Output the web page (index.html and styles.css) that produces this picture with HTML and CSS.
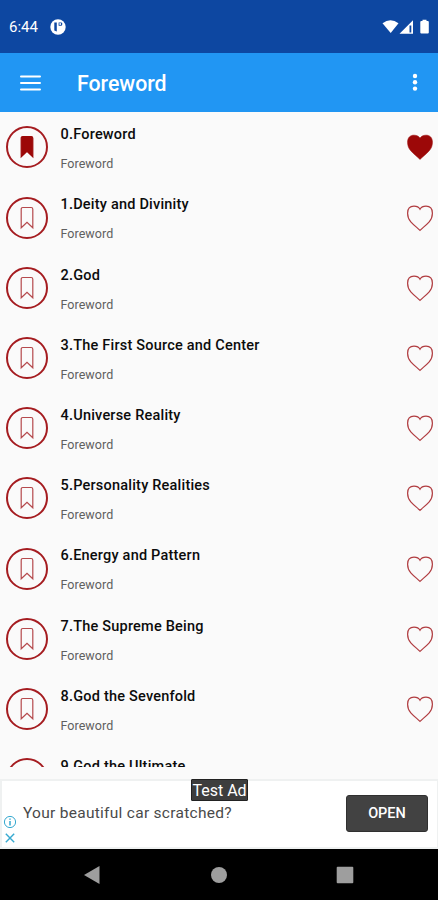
FILE: index.html
```html
<!DOCTYPE html>
<html lang="en">
<head>
<meta charset="utf-8">
<title>Foreword</title>
<link rel="stylesheet" href="styles.css">
</head>
<body>
<svg class="defs" aria-hidden="true">
  <symbol id="bookmark" viewBox="0 0 14 24"><path d="M1.2 3.2Q1.2 1.5 2.8 1.5H11.2Q12.8 1.5 12.8 3.2V21.8L7 16.4L1.2 21.8Z"/></symbol>
  <symbol id="heart" viewBox="0 0 28 28"><path d="M14 26.4C11.5 23.8 8 21.4 4.8 17.8C2.5 15.2 1.6 12.4 1.6 9.2C1.6 4.5 4.2 2.2 8 2.2C10.8 2.2 13 3.4 14 5.3C15 3.4 17.2 2.2 20 2.2C23.8 2.2 26.4 4.5 26.4 9.2C26.4 12.4 25.5 15.2 23.2 17.8C20 21.4 16.5 23.8 14 26.4Z"/></symbol>
</svg>
<div class="screen">
  <div class="status">
    <span class="time">6:44</span>
    <svg class="notif" viewBox="0 0 16 16"><circle cx="8" cy="8" r="7.7" fill="#fff"/><path d="M4.3 3.6H6.8V12.6L4.3 11.4Z" fill="#0d47a1"/><path d="M8.6 3.4H11.2Q12.2 3.4 12.2 4.6V5.6Q12.2 6.8 11 6.8H8.6Z" fill="#0d47a1"/><circle cx="10.2" cy="5" r=".9" fill="#fff"/></svg>
    <svg class="signals" viewBox="0 0 50 16"><path d="M.5 4.2Q8.5-1.8 16.5 4.2L8.7 14Z" fill="#fff"/><path d="M17.5 14.8L31 1.2V14.8Z" fill="#fff"/><path d="M28.4 6.5V13.5" stroke="#0d47a1" stroke-width="1.8"/><path d="M38.3 3Q38.3 2 39.3 2H40.5V.7H44.5V2H45.8Q46.8 2 46.8 3V13.6Q46.8 14.6 45.8 14.6H39.3Q38.3 14.6 38.3 13.6Z" fill="#fff"/></svg>
  </div>
  <header class="appbar">
    <svg class="menu" viewBox="0 0 22 16"><path d="M1 1.5H20M1 8H20M1 14.5H20" stroke="#fff" stroke-width="2" stroke-linecap="round"/></svg>
    <h1>Foreword</h1>
    <svg class="more" viewBox="0 0 6 20"><g fill="#fff"><circle cx="3" cy="3" r="2.2"/><circle cx="3" cy="9.3" r="2.2"/><circle cx="3" cy="15.6" r="2.2"/></g></svg>
  </header>
  <main class="list">
    <div class="row saved"><span class="ring"><svg><use href="#bookmark"/></svg></span><div class="text"><h2>0.Foreword</h2><p>Foreword</p></div><svg class="heart"><use href="#heart"/></svg></div>
    <div class="row"><span class="ring"><svg><use href="#bookmark"/></svg></span><div class="text"><h2>1.Deity and Divinity</h2><p>Foreword</p></div><svg class="heart"><use href="#heart"/></svg></div>
    <div class="row"><span class="ring"><svg><use href="#bookmark"/></svg></span><div class="text"><h2>2.God</h2><p>Foreword</p></div><svg class="heart"><use href="#heart"/></svg></div>
    <div class="row"><span class="ring"><svg><use href="#bookmark"/></svg></span><div class="text"><h2>3.The First Source and Center</h2><p>Foreword</p></div><svg class="heart"><use href="#heart"/></svg></div>
    <div class="row"><span class="ring"><svg><use href="#bookmark"/></svg></span><div class="text"><h2>4.Universe Reality</h2><p>Foreword</p></div><svg class="heart"><use href="#heart"/></svg></div>
    <div class="row"><span class="ring"><svg><use href="#bookmark"/></svg></span><div class="text"><h2>5.Personality Realities</h2><p>Foreword</p></div><svg class="heart"><use href="#heart"/></svg></div>
    <div class="row"><span class="ring"><svg><use href="#bookmark"/></svg></span><div class="text"><h2>6.Energy and Pattern</h2><p>Foreword</p></div><svg class="heart"><use href="#heart"/></svg></div>
    <div class="row"><span class="ring"><svg><use href="#bookmark"/></svg></span><div class="text"><h2>7.The Supreme Being</h2><p>Foreword</p></div><svg class="heart"><use href="#heart"/></svg></div>
    <div class="row"><span class="ring"><svg><use href="#bookmark"/></svg></span><div class="text"><h2>8.God the Sevenfold</h2><p>Foreword</p></div><svg class="heart"><use href="#heart"/></svg></div>
    <div class="row"><span class="ring"></span><div class="text"><h2>9.God the Ultimate</h2></div></div>
  </main>
  <aside class="ad">
    <div class="adchoices">
      <svg viewBox="0 0 14 14"><circle cx="7" cy="7" r="5.6"/><path d="M7 6V10.6M7 3.4V4.8" stroke-width="1.5"/></svg>
      <svg viewBox="0 0 14 14"><path d="M2.8 2.8L11.2 11.2M11.2 2.8L2.8 11.2" stroke-width="1.4"/></svg>
    </div>
    <span class="copy">Your beautiful car scratched?</span>
    <span class="open">OPEN</span>
    <span class="badge">Test Ad</span>
  </aside>
  <nav class="nav">
    <svg viewBox="0 0 18 20"><path d="M1 10L16.5 1V19Z"/></svg>
    <svg viewBox="0 0 18 20"><circle cx="9" cy="10" r="8"/></svg>
    <svg viewBox="0 0 18 20"><rect x=".7" y="1.7" width="16.6" height="16.6" rx="1"/></svg>
  </nav>
</div>
</body>
</html>
```
FILE: styles.css
```css
* { box-sizing: border-box; }
body { margin: 0; font-family: Roboto, "Liberation Sans", sans-serif; }
h1, h2, p { margin: 0; }
svg { display: block; flex: none; }
.defs { position: absolute; width: 0; height: 0; }
.screen { width: 438px; height: 900px; display: flex; flex-direction: column; background: #fafafa; overflow: hidden; }

.status { height: 53px; flex: none; padding: 1px 0 0 9px; display: flex; align-items: center; background: #0d47a1; color: #fff; }
.time { width: 40.5px; font-size: 15px; line-height: 18px; }
.notif { width: 16px; height: 16px; }
.signals { width: 50px; height: 16px; margin-left: auto; margin-right: 6px; }

.appbar { height: 59px; flex: none; padding: 1px 20px 0; display: flex; align-items: center; background: #2196f3; color: #fff; }
.menu { width: 22px; height: 16px; }
.appbar h1 { margin-left: 35px; padding-top: 1px; font-size: 21.3px; font-weight: 500; line-height: 26px; }
.more { width: 6px; height: 20px; margin-left: auto; }

.list { height: 654.5px; flex: none; padding-top: .3px; overflow: hidden; }
.row { height: 70.2px; padding: 0 4.5px 0 6px; display: flex; align-items: center; }
.ring { width: 42px; height: 42px; flex: none; display: flex; align-items: center; justify-content: center; border: 2px solid #a51c20; border-radius: 50%; }
.ring svg { width: 14px; height: 24px; fill: none; stroke: #b5494c; stroke-width: 1.2; }
.saved .ring svg { fill: #9c0808; stroke: #9c0808; }
.text { align-self: stretch; flex: 1; margin-left: 12.5px; padding-top: 14px; }
.text h2 { font-size: 14.5px; font-weight: 500; line-height: 18px; letter-spacing: .21px; color: #0c0c0c; }
.text p { margin-top: 12px; font-size: 12.5px; line-height: 16px; letter-spacing: .05px; color: #606060; }
.heart { width: 28px; height: 28px; fill: none; stroke: #b03c40; stroke-width: 1.2; }
.saved .heart { fill: #9c0808; stroke: #9c0808; stroke-width: .6; }

.ad { position: relative; height: 70px; flex: none; margin-top: 12.5px; padding: 0 9px 2px 3px; display: flex; align-items: center; background: #fff; border: solid #eff1f1; border-width: 2px 1px 2px 2px; }
.adchoices { align-self: flex-end; display: flex; flex-direction: column; gap: 2px; width: 18px; }
.adchoices svg { width: 14px; height: 14px; margin-left: -2px; fill: none; stroke: #36a9d0; stroke-width: 1; }
.copy { font-size: 15.5px; letter-spacing: .28px; color: #4a4a4a; white-space: nowrap; }
.open { width: 82px; height: 37px; margin-left: auto; display: flex; align-items: center; justify-content: center; background: #424242; border: 1px solid #303030; border-radius: 3px; color: #fff; font-size: 14.5px; font-weight: 500; }
.badge { position: absolute; left: 189px; top: -2px; width: 57px; height: 22px; border: 1px solid #222; border-radius: 1px; background: #3d3d3d; color: #fff; font-size: 16px; line-height: 21px; text-align: center; white-space: nowrap; }

.nav { flex: 1; display: flex; align-items: center; gap: 108.5px; padding-left: 83px; background: #000; }
.nav svg { width: 18px; height: 20px; fill: #9e9e9e; }
```
